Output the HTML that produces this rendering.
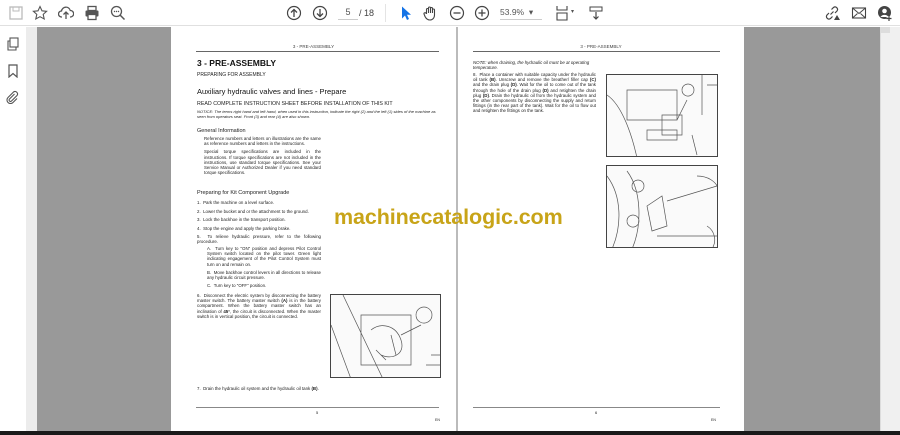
<!DOCTYPE html>
<html><head><meta charset="utf-8"><style>
*{margin:0;padding:0;box-sizing:border-box}
body{width:900px;height:435px;overflow:hidden;background:#fff;font-family:"Liberation Sans",Arial,sans-serif;position:relative}
.abs{position:absolute}
.tb{left:0;top:0;width:900px;height:26px;background:#fff;border-bottom:1px solid #e0e0e0}
.ic{position:absolute;top:5px;width:16px;height:16px}
.side{left:0;top:27px;width:26px;height:404px;background:#fff}
.strip{left:26px;top:27px;width:11px;height:404px;background:#ececec}
.gray{left:37px;top:27px;width:843px;height:404px;background:#999}
.scroll{left:880px;top:27px;width:20px;height:404px;background:#f0f0f0;border-left:1px solid #ddd}
.page{top:27px;height:404px;background:#fff;color:#222}
.p{position:absolute;font-size:4.4px;line-height:5.2px;color:#222}
.hd{position:absolute;font-size:4.5px;color:#444;text-align:center}
.rule{position:absolute;height:1px;background:#666}
.fig{position:absolute;border:1px solid #444;background:#fafafa;overflow:hidden}
.fig svg{position:absolute;left:0;top:0}
</style></head><body>
<div class="abs tb">
 <svg class="ic" style="left:8px" viewBox="0 0 16 16"><rect x="2" y="2" width="12" height="12" fill="none" stroke="#bbb" stroke-width="1.3"/><rect x="5" y="2" width="6" height="4" fill="none" stroke="#bbb"/></svg>
 <svg class="ic" style="left:32px" viewBox="0 0 16 16"><path d="M8 1.5l2 4.3 4.6.5-3.4 3.1 1 4.6L8 11.7 3.8 14l1-4.6L1.4 6.3 6 5.8z" fill="none" stroke="#555" stroke-width="1.1"/></svg>
 <svg class="ic" style="left:58px" viewBox="0 0 16 16"><path d="M4 12H3.5a3 3 0 0 1 0-6 4.5 4.5 0 0 1 8.8-.5A3 3 0 0 1 12.5 12H12M8 14V7M5.5 9.5L8 7l2.5 2.5" fill="none" stroke="#555" stroke-width="1.3"/></svg>
 <svg class="ic" style="left:84px" viewBox="0 0 16 16"><rect x="4" y="1.5" width="8" height="4" fill="none" stroke="#555" stroke-width="1.3"/><rect x="1.5" y="5.5" width="13" height="6" rx="1" fill="#555"/><rect x="4" y="9.5" width="8" height="5" fill="#fff" stroke="#555" stroke-width="1.3"/></svg>
 <svg class="ic" style="left:110px" viewBox="0 0 16 16"><circle cx="6.5" cy="6.5" r="5" fill="none" stroke="#555" stroke-width="1.3"/><path d="M10 10l4.5 4.5" stroke="#555" stroke-width="1.5"/><circle cx="4.5" cy="6.5" r=".7" fill="#555"/><circle cx="6.5" cy="6.5" r=".7" fill="#555"/><circle cx="8.5" cy="6.5" r=".7" fill="#555"/></svg>
 <svg class="ic" style="left:286px" viewBox="0 0 16 16"><circle cx="8" cy="8" r="6.5" fill="none" stroke="#444" stroke-width="1.2"/><path d="M8 12V4.5M5 7.5l3-3 3 3" fill="none" stroke="#444" stroke-width="1.3"/></svg>
 <svg class="ic" style="left:312px" viewBox="0 0 16 16"><circle cx="8" cy="8" r="6.5" fill="none" stroke="#444" stroke-width="1.2"/><path d="M8 4v7.5M5 8.5l3 3 3-3" fill="none" stroke="#444" stroke-width="1.3"/></svg>
 <div class="abs" style="left:338px;top:7px;width:20px;height:13px;border-bottom:1px solid #ccc;font-size:9px;color:#555;text-align:center">5</div>
 <div class="abs" style="left:359px;top:8px;font-size:9px;color:#444">/ 18</div>
 <div class="abs" style="left:385px;top:4px;width:1px;height:18px;background:#e4e4e4"></div>
 <svg class="ic" style="left:398px" viewBox="0 0 16 16"><path d="M4 1.5v12l3-3 2 4.5 2-1-2-4.3h4z" fill="#1473e6"/></svg>
 <svg class="ic" style="left:422px" viewBox="0 0 16 16"><path d="M4.5 9V4.5a1 1 0 0 1 2 0V8M6.5 8V3a1 1 0 0 1 2 0v5M8.5 8V3.5a1 1 0 0 1 2 0V8M10.5 8V5a1 1 0 0 1 2 0v5c0 3-2 5-4.5 5S4 13.5 3 11.5L2 9a1 1 0 0 1 2-.5" fill="none" stroke="#444" stroke-width="1.1"/></svg>
 <svg class="ic" style="left:449px" viewBox="0 0 16 16"><circle cx="8" cy="8" r="6.5" fill="none" stroke="#444" stroke-width="1.2"/><path d="M4.5 8h7" stroke="#444" stroke-width="1.3"/></svg>
 <svg class="ic" style="left:474px" viewBox="0 0 16 16"><circle cx="8" cy="8" r="6.5" fill="none" stroke="#444" stroke-width="1.2"/><path d="M4.5 8h7M8 4.5v7" stroke="#444" stroke-width="1.3"/></svg>
 <div class="abs" style="left:500px;top:7px;width:42px;height:13px;border-bottom:1px solid #ccc;font-size:8.5px;color:#555">53.9% &nbsp;▾</div>
 <svg class="ic" style="left:555px" viewBox="0 0 16 16"><path d="M2 1v4h10V1M2 15V8h10v7z" fill="none" stroke="#444" stroke-width="1.1"/></svg>
 <div class="abs" style="left:571px;top:8px;font-size:6px;color:#555">▾</div>
 <svg class="ic" style="left:588px" viewBox="0 0 16 16"><rect x="2" y="2" width="12" height="4" fill="none" stroke="#444"/><path d="M8 7v7M5.5 11.5L8 14l2.5-2.5" fill="none" stroke="#444" stroke-width="1.2"/></svg>
 <svg class="ic" style="left:824px" viewBox="0 0 16 16"><path d="M6.5 9.5l3-3M5 8l-2 2a2.5 2.5 0 0 0 3.5 3.5l2-2M11 8l2-2a2.5 2.5 0 0 0-3.5-3.5l-2 2" fill="none" stroke="#444" stroke-width="1.2"/><path d="M10 15l3-5 3 5z" fill="#444"/></svg>
 <svg class="ic" style="left:851px" viewBox="0 0 16 16"><rect x="1.5" y="3" width="13" height="10" fill="none" stroke="#444" stroke-width="1.1"/><path d="M1.5 3l6.5 5.5L14.5 3M1.5 13l5-4.5M14.5 13l-5-4.5" fill="none" stroke="#444" stroke-width="1"/></svg>
 <svg class="ic" style="left:877px" viewBox="0 0 16 16"><circle cx="7.5" cy="7.5" r="6.5" fill="#444"/><circle cx="7.5" cy="6" r="2.3" fill="#fff"/><path d="M3.5 12a4.5 4 0 0 1 8 0" fill="#fff"/><path d="M12 11v5M9.5 13.5h5" stroke="#fff" stroke-width="2.5"/><path d="M12 11v5M9.5 13.5h5" stroke="#444" stroke-width="1.2"/></svg>
</div>
<div class="abs side">
 <svg class="abs" style="left:6px;top:10px" width="14" height="14" viewBox="0 0 14 14"><rect x="4" y="1" width="8" height="9" fill="none" stroke="#555" stroke-width="1.1"/><path d="M4 4H2v9h8v-3" fill="none" stroke="#555" stroke-width="1.1"/></svg>
 <svg class="abs" style="left:6px;top:37px" width="14" height="14" viewBox="0 0 14 14"><path d="M3 1h8v12L7 9.5 3 13z" fill="none" stroke="#555" stroke-width="1.2"/></svg>
 <svg class="abs" style="left:5px;top:63px" width="14" height="14" viewBox="0 0 14 14"><path d="M9.5 4l-5 5a1.3 1.3 0 0 0 2 2l5.5-5.5a2.5 2.5 0 0 0-3.5-3.5L3 7.5a3.5 3.5 0 0 0 5 5l4-4" fill="none" stroke="#555" stroke-width="1.1"/></svg>
</div>
<div class="abs strip"></div>
<div class="abs gray"></div>
<div class="abs scroll"><div class="abs" style="left:0;top:0;width:9px;height:6px;background:#ddd"></div></div>

<!-- page 1 -->
<div class="abs page" style="left:171px;width:285px">
 <div class="hd" style="left:0;width:285px;top:17px">3 - PRE-ASSEMBLY</div>
 <div class="rule" style="left:25px;width:243px;top:24px"></div>
 <div class="abs" style="left:26px;top:31px;font-size:8.5px;font-weight:bold;color:#111">3 - PRE-ASSEMBLY</div>
 <div class="abs" style="left:26px;top:45px;font-size:5px;color:#222">PREPARING FOR ASSEMBLY</div>
 <div class="abs" style="left:26px;top:60px;font-size:7.5px;color:#111">Auxiliary hydraulic valves and lines - Prepare</div>
 <div class="abs" style="left:26px;top:74px;font-size:5.3px;color:#222">READ COMPLETE INSTRUCTION SHEET BEFORE INSTALLATION OF THIS KIT</div>
 <div class="p" style="left:26px;top:82px;width:245px;font-style:italic;font-size:4px;line-height:5px">NOTICE: The terms right hand and left hand, when used in this instruction, indicate the right (2) and the left (1) sides of the machine as seen from operators seat. Front (3) and rear (4) are also shown.</div>
 <div class="abs" style="left:26px;top:101px;font-size:5.5px;color:#222">General Information</div>
 <div class="p" style="left:33px;top:109px;width:117px;text-align:justify">Reference numbers and letters on illustrations are the same as reference numbers and letters in the instructions.<br><span style="display:block;height:3px"></span>Special torque specifications are included in the instructions. If torque specifications are not included in the instructions, use standard torque specifications. See your Service Manual or Authorized Dealer if you need standard torque specifications.</div>
 <div class="abs" style="left:26px;top:163px;font-size:5.5px;color:#222">Preparing for Kit Component Upgrade</div>
 <div class="p" style="left:26px;top:172px;width:124px;line-height:8.6px">1.&nbsp; Park the machine on a level surface.<br>2.&nbsp; Lower the bucket and or the attachment to the ground.<br>3.&nbsp; Lock the backhoe in the transport position.<br>4.&nbsp; Stop the engine and apply the parking brake.</div>
 <div class="p" style="left:26px;top:207px;width:124px;text-align:justify">5.&nbsp; To relieve hydraulic pressure, refer to the following procedure.</div>
 <div class="p" style="left:36px;top:219px;width:114px;text-align:justify">A.&nbsp; Turn key to "ON" position and depress Pilot Control System switch located on the pilot tower. Green light indicating engagement of the Pilot Control System must turn on and remain on.<br><span style="display:block;height:3px"></span>B.&nbsp; Move backhoe control levers in all directions to release any hydraulic circuit pressure.<br><span style="display:block;height:3px"></span>C.&nbsp; Turn key to "OFF" position.</div>
 <div class="p" style="left:26px;top:266px;width:124px;text-align:justify">6.&nbsp; Disconnect the electric system by disconnecting the battery master switch. The battery master switch <b>(A)</b> is in the battery compartment. When the battery master switch has an inclination of <b>45°</b>, the circuit is disconnected. When the master switch is in vertical position, the circuit is connected.</div>
 <div class="fig" style="left:159px;top:267px;width:111px;height:84px"><svg width="111" height="84" viewBox="0 0 111 84" fill="none" stroke="#555" stroke-width=".7"><path d="M0 30l20 54M12 0l40 84M30 20h50v50H30zM40 35c10-8 25-5 30 10s-10 20-20 15M70 40l20-10M85 20a8 8 0 1 1 0 .1M100 60h10M95 70h15v14M60 40l5 20M45 55l10 10"/></svg></div>
 <div class="p" style="left:26px;top:359px;width:124px">7.&nbsp; Drain the hydraulic oil system and the hydraulic oil tank <b>(B)</b>.</div>
 <div class="rule" style="left:25px;width:243px;top:380px;background:#888"></div>
 <div class="abs" style="left:145px;top:383px;font-size:4px">5</div>
 <div class="abs" style="left:264px;top:391px;font-size:3.5px">EN</div>
</div>
<div class="abs" style="left:456px;top:27px;width:2px;height:404px;background:#bbb"></div>
<!-- page 2 -->
<div class="abs page" style="left:458px;width:286px">
 <div class="hd" style="left:0;width:286px;top:17px">3 - PRE-ASSEMBLY</div>
 <div class="rule" style="left:15px;width:247px;top:24px"></div>
 <div class="p" style="left:15px;top:33px;width:125px;font-style:italic">NOTE: when draining, the hydraulic oil must be at operating temperature.</div>
 <div class="p" style="left:15px;top:45px;width:123px;text-align:justify">8.&nbsp; Place a container with suitable capacity under the hydraulic oil tank <b>(B)</b>. Unscrew and remove the breather/ filler cap <b>(C)</b> and the drain plug <b>(D)</b>. Wait for the oil to come out of the tank through the hole of the drain plug <b>(D)</b> and retighten the drain plug <b>(D)</b>. Drain the hydraulic oil from the hydraulic system and the other components by disconnecting the supply and return fittings (in the rear part of the tank). Wait for the oil to flow out and retighten the fittings on the tank.</div>
 <div class="fig" style="left:148px;top:47px;width:112px;height:83px"><svg width="112" height="83" viewBox="0 0 112 83" fill="none" stroke="#555" stroke-width=".7"><path d="M0 20c15 10 25 40 30 63M20 15h50v30H20zM55 40h20v20H55zM40 55h30v10H40zM80 25l-10 20M75 15a6 6 0 1 1 0 .1M85 60l5 20M95 0v40M100 10h12"/></svg></div>
 <div class="fig" style="left:148px;top:138px;width:112px;height:83px"><svg width="112" height="83" viewBox="0 0 112 83" fill="none" stroke="#555" stroke-width=".7"><path d="M0 10c15 20 15 50 5 73M20 5c15 20 15 55 5 78M40 40l15-10 5 30-15 5zM25 20a6 6 0 1 1 0 .1M20 55a6 6 0 1 1 0 .1M50 70h62M60 35l50-15M90 10c10 0 20 5 22 15M100 60c8 5 10 15 5 23"/></svg></div>
 <div class="rule" style="left:15px;width:247px;top:380px;background:#888"></div>
 <div class="abs" style="left:137px;top:383px;font-size:4px">6</div>
 <div class="abs" style="left:253px;top:391px;font-size:3.5px">EN</div>
</div>
<div class="abs" style="left:334px;top:205px;font-size:21.5px;font-weight:bold;color:#c8a418;letter-spacing:-0.1px">machinecatalogic.com</div>
<div class="abs" style="left:0;top:431px;width:900px;height:4px;background:#1a1a1a"></div>
</body></html>
